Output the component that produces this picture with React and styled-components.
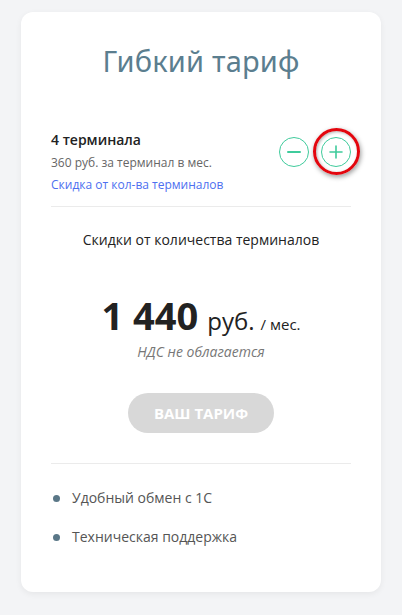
import styled, { createGlobalStyle } from "styled-components";

const GlobalStyle = createGlobalStyle`
  html, body {
    margin: 0;
    padding: 0;
    background: #f3f4f6;
  }
  body {
    font-family: "Open Sans", "Noto Sans", sans-serif;
  }
`;

const Page = styled.div`
  padding: 12px 21px 23px 21px;
`;

const Card = styled.div`
  width: 360px;
  height: 580px;
  box-sizing: border-box;
  background: #fff;
  border-radius: 12px;
  box-shadow: 0 2px 6px rgba(0, 0, 0, 0.06);
  padding: 0 30px;
  display: flex;
  flex-direction: column;
`;

const Title = styled.h2`
  margin: 30px 0 0 0;
  text-align: center;
  font-family: "Noto Sans", "Open Sans", sans-serif;
  font-weight: 400;
  font-size: 29px;
  line-height: 38px;
  color: #5b7e8f;
  letter-spacing: 0.2px;
`;

const TerminalRow = styled.div`
  margin-top: 50px;
  padding-bottom: 13px;
  border-bottom: 1px solid #ebebeb;
  display: flex;
  align-items: flex-start;
  justify-content: space-between;
`;

const TerminalInfo = styled.div`
  display: flex;
  flex-direction: column;
`;

const TerminalCount = styled.div`
  font-size: 14px;
  font-weight: 600;
  color: #222;
  line-height: 20px;
`;

const TerminalPrice = styled.div`
  margin-top: 5px;
  font-size: 12px;
  color: #666;
  line-height: 16px;
`;

const DiscountLink = styled.a`
  margin-top: 6px;
  font-size: 12px;
  line-height: 16px;
  color: #4d6ff0;
  text-decoration: none;
  cursor: pointer;
`;

const Counter = styled.div`
  position: relative;
  display: flex;
  gap: 12px;
  margin-top: 7px;
`;

const RoundButton = styled.button`
  width: 30px;
  height: 30px;
  padding: 0;
  border-radius: 50%;
  border: 1px solid #3fcb9c;
  background: #fff;
  display: flex;
  align-items: center;
  justify-content: center;
  cursor: pointer;
`;

const Highlight = styled.div`
  position: absolute;
  right: -9px;
  top: -9px;
  width: 41px;
  height: 41px;
  border: 3.5px solid #e3060e;
  border-radius: 50%;
  box-shadow: 1px 2px 5px rgba(0, 0, 0, 0.4), inset 1px 1px 3px rgba(0, 0, 0, 0.3);
  pointer-events: none;
`;

const Subtitle = styled.div`
  margin-top: 23px;
  text-align: center;
  font-size: 14px;
  color: #222;
  line-height: 20px;
`;

const PriceLine = styled.div`
  margin-top: 42px;
  display: flex;
  align-items: baseline;
  justify-content: center;
  color: #222;
`;

const Amount = styled.span`
  font-size: 38px;
  font-weight: 700;
  line-height: 46px;
`;

const Currency = styled.span`
  margin-left: 9px;
  font-size: 24px;
  line-height: 30px;
`;

const Period = styled.span`
  margin-left: 6px;
  font-size: 15px;
`;

const Vat = styled.div`
  margin-top: 4px;
  text-align: center;
  font-size: 14px;
  font-style: italic;
  color: #777;
  line-height: 20px;
`;

const TariffButton = styled.button`
  align-self: center;
  margin-top: 31px;
  width: 146px;
  height: 40px;
  border: none;
  border-radius: 20px;
  background: #d8d8d8;
  color: #fff;
  font-family: "Open Sans", sans-serif;
  font-weight: 700;
  font-size: 15px;
  cursor: default;
`;

const Divider = styled.hr`
  margin: 30px 0 0 0;
  border: none;
  border-top: 1px solid #ebebeb;
`;

const Features = styled.ul`
  list-style: none;
  margin: 24px 0 0 0;
  padding: 0;
  display: flex;
  flex-direction: column;
  gap: 19px;
`;

const Feature = styled.li`
  display: flex;
  align-items: center;
  gap: 12px;
  padding-left: 2px;
  font-size: 14px;
  color: #555;
  line-height: 20px;

  &::before {
    content: "";
    width: 7px;
    height: 7px;
    border-radius: 50%;
    background: #5a7787;
  }
`;

const Minus = () => (
  <svg width="16" height="16" viewBox="0 0 16 16">
    <path d="M2 8h12" stroke="#3fcb9c" strokeWidth="2" strokeLinecap="round" />
  </svg>
);

const Plus = () => (
  <svg width="16" height="16" viewBox="0 0 16 16">
    <path d="M2 8h12M8 2v12" stroke="#3fcb9c" strokeWidth="1.6" strokeLinecap="round" />
  </svg>
);

const features = ["Удобный обмен с 1С", "Техническая поддержка"];

const App = () => {
  return (
    <>
      <GlobalStyle />
      <Page>
        <Card>
          <Title>Гибкий тариф</Title>
          <TerminalRow>
            <TerminalInfo>
              <TerminalCount>4 терминала</TerminalCount>
              <TerminalPrice>360 руб. за терминал в мес.</TerminalPrice>
              <DiscountLink>Скидка от кол-ва терминалов</DiscountLink>
            </TerminalInfo>
            <Counter>
              <RoundButton aria-label="minus">
                <Minus />
              </RoundButton>
              <RoundButton aria-label="plus">
                <Plus />
              </RoundButton>
              <Highlight />
            </Counter>
          </TerminalRow>
          <Subtitle>Скидки от количества терминалов</Subtitle>
          <PriceLine>
            <Amount>1 440</Amount>
            <Currency>руб.</Currency>
            <Period>/ мес.</Period>
          </PriceLine>
          <Vat>НДС не облагается</Vat>
          <TariffButton>ВАШ ТАРИФ</TariffButton>
          <Divider />
          <Features>
            {features.map((f) => (
              <Feature key={f}>{f}</Feature>
            ))}
          </Features>
        </Card>
      </Page>
    </>
  );
};

export default App;
